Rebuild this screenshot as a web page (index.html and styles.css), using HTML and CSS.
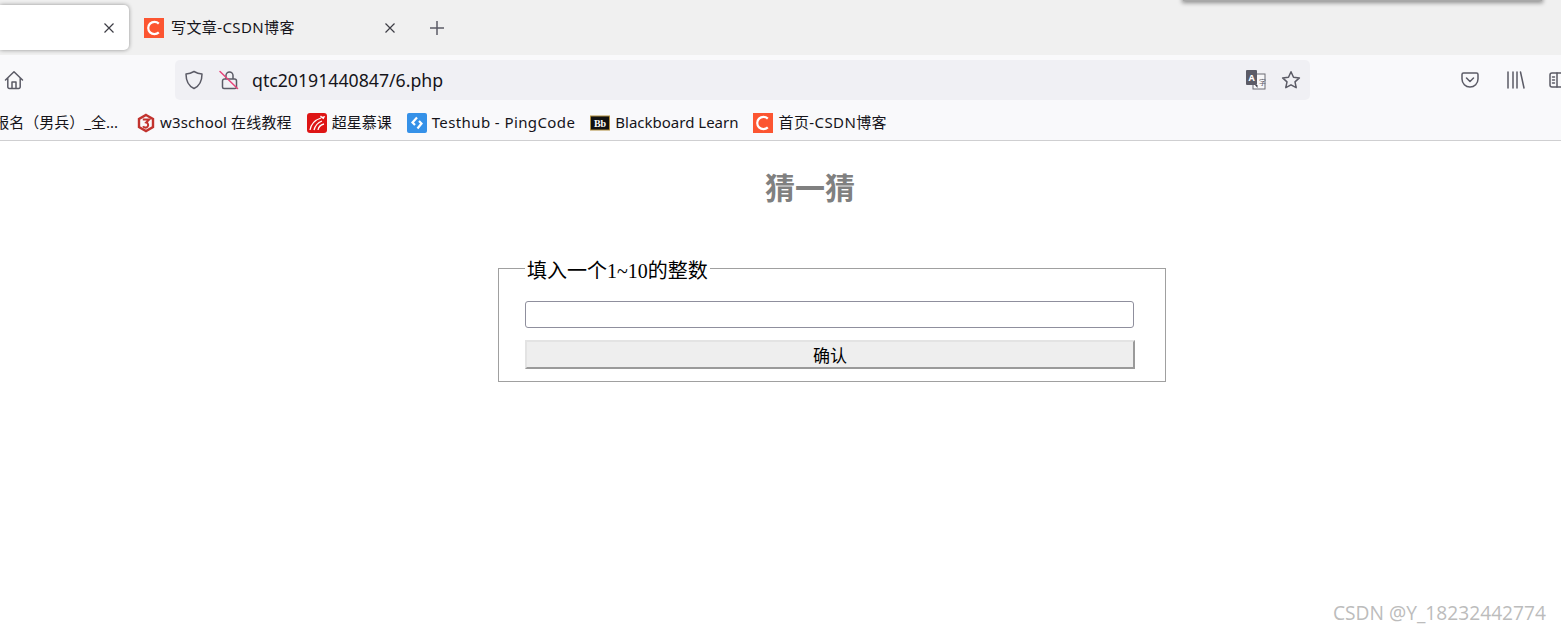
FILE: index.html
```html
<!DOCTYPE html>
<html lang="zh">
<head>
<meta charset="utf-8">
<title>猜一猜</title>
<link rel="stylesheet" href="styles.css">
</head>
<body>
<header class="chrome">
  <div class="tabstrip">
    <div class="tab tab-active">
      <svg class="close" viewBox="0 0 12 12"><path d="M1.5 1.5l9 9M10.5 1.5l-9 9"/></svg>
    </div>
    <div class="tab tab-idle">
      <svg class="fav" viewBox="0 0 20 20"><rect width="20" height="20" fill="#fc5531"/><path d="M14.8 5.6A6.2 6.2 0 1 0 14.8 14.4" fill="none" stroke="#fff" stroke-width="2.2"/></svg>
      <span class="tab-title">写文章-CSDN博客</span>
      <svg class="close" viewBox="0 0 12 12"><path d="M1.5 1.5l9 9M10.5 1.5l-9 9"/></svg>
    </div>
    <svg class="plus" viewBox="0 0 16 16"><path d="M8 1v14M1 8h14"/></svg>
    <div class="popup-edge"></div>
  </div>
  <div class="toolbar">
    <svg class="ico home" viewBox="0 0 20 20"><path d="M1.500 10L10 1.800 18.500 10M3.800 8v9a1.500 1.500 0 0 0 1.500 1.500h9.400a1.500 1.500 0 0 0 1.500-1.500V8M8 18.500V12h4v6.500"/></svg>
    <div class="urlbar">
      <svg class="ico shield" viewBox="0 0 20 20"><path d="M10 1.500c2.500 1.500 5 2.300 8 2.500 0 7-2.500 12-8 14.500C4.500 16 2 11 2 4c3-.2 5.500-1 8-2.500z"/></svg>
      <svg class="ico lock" viewBox="0 0 20 20"><path d="M7 9V5.500a3.500 3.500 0 0 1 7 0V9M3.500 11a2 2 0 0 1 2-2h10a2 2 0 0 1 2 2v6a1.500 1.500 0 0 1-1.500 1.500H5A1.500 1.500 0 0 1 3.500 17z"/><path class="slash" d="M1 1.500l17.500 17"/></svg>
      <span class="url">qtc20191440847/6.php</span>
      <svg class="translate" viewBox="0 0 20 20"><rect x="7" y="4" width="12" height="15" fill="#f7f7f9" stroke="#6b6b73"/><rect x="0" y="0" width="11" height="15" rx="1" fill="#5b5b66"/><path d="M9 15h2.500v3z" fill="#3a3a44"/><text x="5.500" y="11" class="tr-a">A</text><text x="13" y="15" class="tr-z">字</text></svg>
      <svg class="ico star" viewBox="0 0 20 20"><path d="M10 1.800l2.500 5.400 5.900.7-4.400 4 1.200 5.800-5.200-2.900-5.200 2.900 1.200-5.800-4.400-4 5.900-.7z"/></svg>
    </div>
    <svg class="ico pocket" viewBox="0 0 20 20"><path d="M3.500 3h13A1.500 1.500 0 0 1 18 4.500V9a8 8 0 0 1-16 0V4.500A1.500 1.500 0 0 1 3.500 3z"/><path d="M6.500 8l3.500 3.500L13.500 8"/></svg>
    <svg class="ico library" viewBox="0 0 20 20"><path d="M3 2v16M8 2v16M12 2v16M15.500 2l3.500 16"/></svg>
    <svg class="ico sidebar" viewBox="0 0 20 20"><rect x="2" y="3" width="18" height="14" rx="2"/><path d="M9 3v14M4.500 7h2M4.500 10h2M4.500 13h2"/></svg>
  </div>
  <nav class="bookmarks">
    <div class="bm bm-first"><span>报名（男兵）_全...</span></div>
    <div class="bm bm-w3">
      <svg class="bm-ico" viewBox="0 0 20 20"><path d="M10 2l7 4v8l-7 4-7-4V6z" fill="none" stroke="#c2332e" stroke-width="2.400"/><path d="M6.800 6.500h6.400l-3 3a2.600 2.600 0 1 1-3 3.600" fill="none" stroke="#c2332e" stroke-width="2"/></svg>
      <span class="sp-s">w3school 在线教程</span>
    </div>
    <div class="bm">
      <svg class="bm-ico" viewBox="0 0 20 20"><rect width="20" height="20" rx="3" fill="#de1515"/><path d="M3 17C4 11 8 7 14 5M7 17c1-4 3-7 8-9M11 17c.5-3 2-5 6-6M13.500 3l1.500 1.500L17 4l-1 2" fill="none" stroke="#fff" stroke-width="1.300"/></svg>
      <span>超星慕课</span>
    </div>
    <div class="bm">
      <svg class="bm-ico" viewBox="0 0 20 20"><rect width="20" height="20" rx="2" fill="#3591e8"/><path d="M10 4.500L5.500 9.500 8 12M10.500 15.500l4-5L12 8" fill="none" stroke="#fff" stroke-width="2.200"/></svg>
      <span class="sp-l">Testhub - PingCode</span>
    </div>
    <div class="bm">
      <svg class="bm-ico" viewBox="0 0 20 20"><rect x=".5" y="3" width="19" height="14" fill="#111" stroke="#b08d3c"/><text x="10" y="14" class="bb">Bb</text></svg>
      <span>Blackboard Learn</span>
    </div>
    <div class="bm">
      <svg class="bm-ico" viewBox="0 0 20 20"><rect width="20" height="20" fill="#fc5531"/><path d="M14.800 5.600A6.200 6.200 0 1 0 14.800 14.400" fill="none" stroke="#fff" stroke-width="2.200"/></svg>
      <span class="sp-l">首页-CSDN博客</span>
    </div>
  </nav>
</header>
<main class="page">
  <h2 class="title">猜一猜</h2>
  <form class="guess" action="#">
    <fieldset class="box">
      <legend class="box-label">填入一个1~10的整数</legend>
      <input class="field" type="text">
      <button class="submit" type="button">确认</button>
    </fieldset>
  </form>
  <div class="watermark">CSDN @Y_18232442774</div>
</main>
</body>
</html>
```
FILE: styles.css
```css
* { box-sizing: border-box; }
html, body { margin: 0; height: 100%; overflow: hidden; background: #fff; }
body { width: 1561px; height: 634px; display: flex; flex-direction: column; font-family: "Noto Sans", "Noto Sans CJK SC", sans-serif; }

.chrome { flex: none; height: 141px; display: flex; flex-direction: column; border-bottom: 1px solid #cfcfd1; background: #f9f9fb; color: #15141a; }

.tabstrip { position: relative; height: 55px; display: flex; align-items: center; background: #f0f0f0; }
.tab { height: 45px; display: flex; align-items: center; }
.tab-active { width: 129px; justify-content: flex-end; padding-right: 14px; background: #fff; border-radius: 0 5px 5px 0; box-shadow: 0 0 4px rgba(0,0,0,.4); }
.tab-idle { width: 281px; padding-left: 15px; padding-right: 14px; }
.fav { width: 20px; height: 20px; flex: none; margin-right: 7px; }
.tab-title { font-size: 15px; letter-spacing: .4px; margin-bottom: 2px; white-space: nowrap; flex: 1; }
.close { width: 12px; height: 12px; flex: none; }
.close path { fill: none; stroke: #3d3d45; stroke-width: 1.2; }
.plus { width: 16px; height: 16px; margin-left: 19px; }
.plus path { fill: none; stroke: #5b5b66; stroke-width: 1.5; }
.popup-edge { position: absolute; left: 1183px; top: -4px; width: 359px; height: 5px; background: #a8a8a8; box-shadow: 0 1px 4px 1px rgba(0,0,0,.4); }

.toolbar { height: 50px; display: flex; align-items: center; padding-left: 4px; overflow: hidden; }
.ico { width: 20px; height: 20px; flex: none; fill: none; stroke: #5b5b66; stroke-width: 1.5; stroke-linejoin: round; stroke-linecap: round; }
.urlbar { flex: none; width: 1135px; height: 40px; margin-left: 151px; display: flex; align-items: center; padding-left: 9px; background: #f0f0f4; border-radius: 5px; }
.lock { margin-left: 15px; }
.lock .slash { stroke: #e8457a; }
.url { margin-left: 13px; flex: 1; font-size: 17.7px; white-space: nowrap; }
.translate { width: 20px; height: 20px; flex: none; margin-right: 15px; }
.tr-a { font: bold 9px "Noto Sans", sans-serif; fill: #fff; text-anchor: middle; }
.tr-z { font: 7px "Noto Sans CJK SC", sans-serif; fill: #5b5b66; }
.star { margin-right: 9px; }
.pocket { margin-left: 150px; }
.library { margin-left: 25px; }
.sidebar { margin-left: 23px; }

.bookmarks { flex: 1; display: flex; align-items: center; gap: 15px; font-size: 15px; white-space: nowrap; }
.bm { display: flex; align-items: center; gap: 5px; }
.bm span { margin-bottom: 2px; }
.bm-first { width: 121px; justify-content: flex-end; overflow: hidden; padding-right: 3px; }
.bm-first span { flex: none; }
.bm-w3 { gap: 4px; }
.sp-s { letter-spacing: .13px; }
.sp-l { letter-spacing: .4px; }
.bm-ico { width: 20px; height: 20px; flex: none; }
.bb { font: bold 10px "Liberation Serif", serif; fill: #fff; text-anchor: middle; }

.page { position: relative; flex: 1; }
.title { margin: 27px 0 45px; padding-left: 59px; text-align: center; font-size: 30px; line-height: 40px; font-weight: bold; color: #808080; }
.guess { margin: 0 0 0 498px; width: 668px; }
.box { margin: 0; width: 668px; min-width: 0; padding: 18px 30px 12px 26px; border: 1px solid #a0a0a0; }
.box-label { padding: 6px 2px 0; margin-left: 0; font-family: "Liberation Serif", "Noto Sans CJK SC", serif; font-size: 20px; line-height: 24px; color: #000; }
.field { display: block; width: 609px; height: 27px; margin: 0 0 12px; padding: 1px 2px; border: 1px solid #8f8f9d; border-radius: 3px; background: #fff; }
.submit { display: block; width: 610px; height: 29px; margin: 0; padding: 0; background: #eeeeee; border-style: solid; border-width: 2px; border-color: #e3e3e3 #9a9a9a #9a9a9a #e3e3e3; border-radius: 0; font-family: "Noto Sans CJK SC", sans-serif; font-size: 17px; line-height: 25px; color: #000; }
.watermark { position: absolute; right: 15px; bottom: 8px; font-family: "Open Sans", sans-serif; font-size: 19.2px; color: #bcbcbc; white-space: nowrap; }
```
